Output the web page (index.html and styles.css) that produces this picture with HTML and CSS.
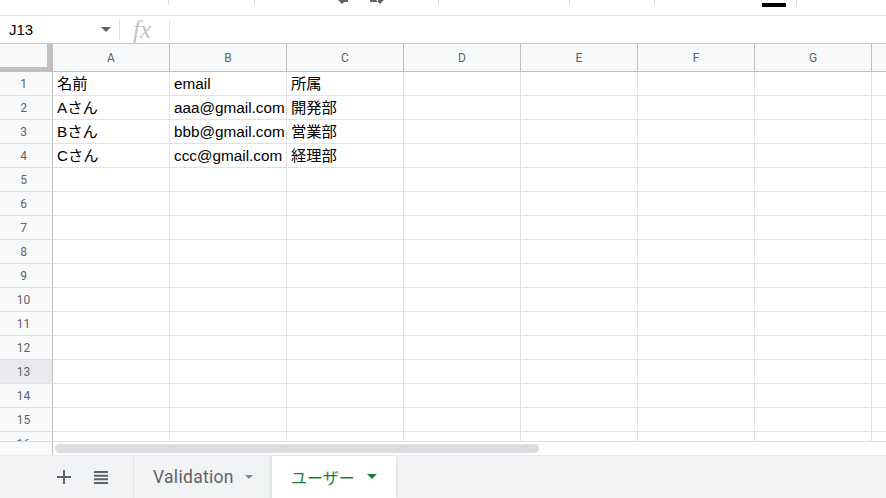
FILE: index.html
```html
<!DOCTYPE html>
<html lang="ja">
<head>
<meta charset="utf-8">
<title>Sheet</title>
<link rel="stylesheet" href="styles.css">
</head>
<body>
<div class="app">
  <div class="toolstrip">
    <span class="tsep s1"></span>
    <span class="tsep s2"></span>
    <svg class="undo" width="50" height="5" viewBox="0 0 50 5"><path d="M2 0 L6 4 L10 0 Z" fill="#5f6368"/><path d="M6 0 V2 H12 V0" fill="#5f6368"/><path d="M34 0 H42 V2 H34Z M40 0 L44 4 L48 0Z" fill="#5f6368"/></svg>
    <span class="tsep s3"></span>
    <span class="tsep s4"></span>
    <span class="tsep s5"></span>
    <span class="blackbar"></span>
    <span class="tsep s6"></span>
  </div>
  <div class="formulabar">
    <div class="namebox"><span class="nameval">J13</span><span class="caret"></span></div>
    <div class="fx">fx</div>
    <div class="formula"></div>
  </div>
  <div class="sheet">
    <div class="row head">
      <div class="rh corner"></div>
      <div class="ch">A</div><div class="ch">B</div><div class="ch">C</div><div class="ch">D</div><div class="ch">E</div><div class="ch">F</div><div class="ch">G</div><div class="ch last"></div>
    </div>
    <div class="row"><div class="rh">1</div><div class="c">名前</div><div class="c">email</div><div class="c">所属</div><div class="c"></div><div class="c"></div><div class="c"></div><div class="c"></div><div class="c last"></div></div>
    <div class="row"><div class="rh">2</div><div class="c">Aさん</div><div class="c">aaa@gmail.com</div><div class="c">開発部</div><div class="c"></div><div class="c"></div><div class="c"></div><div class="c"></div><div class="c last"></div></div>
    <div class="row"><div class="rh">3</div><div class="c">Bさん</div><div class="c">bbb@gmail.com</div><div class="c">営業部</div><div class="c"></div><div class="c"></div><div class="c"></div><div class="c"></div><div class="c last"></div></div>
    <div class="row"><div class="rh">4</div><div class="c">Cさん</div><div class="c">ccc@gmail.com</div><div class="c">経理部</div><div class="c"></div><div class="c"></div><div class="c"></div><div class="c"></div><div class="c last"></div></div>
    <div class="row"><div class="rh">5</div><div class="c"></div><div class="c"></div><div class="c"></div><div class="c"></div><div class="c"></div><div class="c"></div><div class="c"></div><div class="c last"></div></div>
    <div class="row"><div class="rh">6</div><div class="c"></div><div class="c"></div><div class="c"></div><div class="c"></div><div class="c"></div><div class="c"></div><div class="c"></div><div class="c last"></div></div>
    <div class="row"><div class="rh">7</div><div class="c"></div><div class="c"></div><div class="c"></div><div class="c"></div><div class="c"></div><div class="c"></div><div class="c"></div><div class="c last"></div></div>
    <div class="row"><div class="rh">8</div><div class="c"></div><div class="c"></div><div class="c"></div><div class="c"></div><div class="c"></div><div class="c"></div><div class="c"></div><div class="c last"></div></div>
    <div class="row"><div class="rh">9</div><div class="c"></div><div class="c"></div><div class="c"></div><div class="c"></div><div class="c"></div><div class="c"></div><div class="c"></div><div class="c last"></div></div>
    <div class="row"><div class="rh">10</div><div class="c"></div><div class="c"></div><div class="c"></div><div class="c"></div><div class="c"></div><div class="c"></div><div class="c"></div><div class="c last"></div></div>
    <div class="row"><div class="rh">11</div><div class="c"></div><div class="c"></div><div class="c"></div><div class="c"></div><div class="c"></div><div class="c"></div><div class="c"></div><div class="c last"></div></div>
    <div class="row"><div class="rh">12</div><div class="c"></div><div class="c"></div><div class="c"></div><div class="c"></div><div class="c"></div><div class="c"></div><div class="c"></div><div class="c last"></div></div>
    <div class="row"><div class="rh sel">13</div><div class="c"></div><div class="c"></div><div class="c"></div><div class="c"></div><div class="c"></div><div class="c"></div><div class="c"></div><div class="c last"></div></div>
    <div class="row"><div class="rh">14</div><div class="c"></div><div class="c"></div><div class="c"></div><div class="c"></div><div class="c"></div><div class="c"></div><div class="c"></div><div class="c last"></div></div>
    <div class="row"><div class="rh">15</div><div class="c"></div><div class="c"></div><div class="c"></div><div class="c"></div><div class="c"></div><div class="c"></div><div class="c"></div><div class="c last"></div></div>
    <div class="row"><div class="rh">16</div><div class="c"></div><div class="c"></div><div class="c"></div><div class="c"></div><div class="c"></div><div class="c"></div><div class="c"></div><div class="c last"></div></div>
  </div>
  <div class="hscroll">
    <div class="hs-left"></div>
    <div class="hs-track"><div class="thumb"></div></div>
  </div>
  <div class="tabbar">
    <div class="tabtools">
      <svg class="plus" width="14" height="14" viewBox="0 0 14 14"><path d="M6 0h2v6h6v2H8v6H6V8H0V6h6z" fill="#5f6368"/></svg>
      <svg class="list" width="16" height="14" viewBox="0 0 16 14"><path d="M1 1h14v2H1zM1 4.7h14v2H1zM1 8.3h14v2H1zM1 12h14v2H1z" fill="#5f6368"/></svg>
    </div>
    <div class="tab">Validation<span class="tcaret"></span></div>
    <div class="tab active">ユーザー<span class="tcaret"></span></div>
  </div>
</div>
</body>
</html>
```

FILE: styles.css
```css
* { box-sizing: border-box; }
html, body { margin: 0; padding: 0; }
body {
  width: 886px;
  height: 498px;
  overflow: hidden;
  background: #fff;
  font-family: "Liberation Sans", Arial, "Noto Sans CJK JP", sans-serif;
}
.app { width: 886px; height: 498px; display: flex; flex-direction: column; }

.toolstrip {
  position: relative;
  height: 16px;
  flex: none;
  border-bottom: 1px solid #e0e0e0;
}
.tsep { position: absolute; top: 0; width: 1px; height: 5px; background: #dadce0; }
.s1 { left: 168px; }
.s2 { left: 254px; }
.s3 { left: 438px; }
.s4 { left: 569px; }
.s5 { left: 654px; }
.s6 { left: 796px; }
.undo { position: absolute; left: 336px; top: 0; }
.blackbar { position: absolute; left: 762px; top: 3px; width: 24px; height: 4px; background: #000; }

.formulabar {
  height: 28px;
  flex: none;
  display: flex;
  align-items: center;
  border-bottom: 1px solid #c4c7c5;
}
.namebox {
  width: 120px;
  display: flex;
  align-items: center;
  justify-content: space-between;
  padding: 0 8px 0 9px;
  border-right: 1px solid #e0e0e0;
  height: 20px;
}
.nameval { font-size: 15px; color: #000; margin-top: -1px; }
.caret {
  width: 0; height: 0;
  border-left: 5px solid transparent;
  border-right: 5px solid transparent;
  border-top: 5px solid #5f6368;
}
.fx {
  width: 50px;
  height: 20px;
  display: flex;
  align-items: center;
  padding-left: 13px;
  font-family: "Liberation Serif", serif;
  font-style: italic;
  font-size: 25px;
  color: #c0c4c8;
  border-right: 1px solid #e0e0e0;
  line-height: 20px;
}
.formula { flex: 1; }

.sheet {
  height: 398px;
  flex: none;
  overflow: hidden;
  border-bottom: 1px solid #dadce0;
}
.row { display: flex; height: 24px; }
.row.head { height: 28px; }
.rh {
  width: 53px;
  flex: none;
  background: #f8f9fa;
  border-right: 1px solid #c0c0c0;
  border-bottom: 1px solid #e2e2e2;
  display: flex;
  align-items: center;
  justify-content: center;
  padding-right: 5px;
  font-family: "Roboto", "Liberation Sans", sans-serif;
  font-size: 12px;
  color: #5f6368;
}
.rh.sel { background: #e8eaed; }
.corner {
  border-bottom: 1px solid #c0c0c0;
  box-shadow: inset -5px -4px 0 #c0c0c0;
}
.ch {
  width: 117px;
  flex: none;
  background: #f8f9fa;
  border-right: 1px solid #c0c0c0;
  border-bottom: 1px solid #c0c0c0;
  display: flex;
  align-items: center;
  justify-content: center;
  font-family: "Roboto", "Liberation Sans", sans-serif;
  font-size: 12px;
  color: #5f6368;
  padding-top: 1px;
}
.c {
  width: 117px;
  flex: none;
  border-right: 1px solid #e2e2e2;
  border-bottom: 1px solid #e2e2e2;
  padding: 0 3px 0 4px;
  font-size: 15.3px;
  line-height: 23px;
  color: #000;
  white-space: nowrap;
  overflow: visible;
}
.last { width: 40px; }

.hscroll { height: 13px; flex: none; display: flex; }
.hs-left { width: 53px; background: #f8f9fa; border-right: 1px solid #c0c0c0; }
.hs-track { flex: 1; padding: 2px 0 0 2px; }
.thumb { width: 484px; height: 9px; border-radius: 5px; background: #dadce0; }

.tabbar {
  flex: 1;
  background: #f1f3f4;
  display: flex;
  align-items: stretch;
  border-top: 1px solid #e8eaed;
}
.tabtools {
  width: 133px;
  display: flex;
  align-items: center;
  padding-left: 57px;
  gap: 22px;
}
.tab {
  width: 138px;
  display: flex;
  align-items: center;
  padding-left: 19px;
  border-left: 1px solid #e3e5e8;
  font-family: "Roboto", "Noto Sans CJK JP", sans-serif;
  font-weight: 400;
  font-size: 17.5px;
  letter-spacing: 0.3px;
  color: #5f6368;
  padding-bottom: 1px;
}
.tab .tcaret {
  margin-left: 11px;
  width: 0; height: 0;
  border-left: 4px solid transparent;
  border-right: 4px solid transparent;
  border-top: 4px solid #80868b;
}
.tab.active {
  width: 125px;
  background: #fff;
  color: #188038;
  font-family: "Noto Sans CJK JP", sans-serif;
  font-weight: 400;
  font-size: 16px;
  letter-spacing: 0;
  padding-left: 19px;
  box-shadow: 0 1px 3px rgba(60,64,67,0.25);
}
.tab.active .tcaret { margin-left: 12px; border-top-color: #188038; border-left-width: 5px; border-right-width: 5px; border-top-width: 5px; }
```
